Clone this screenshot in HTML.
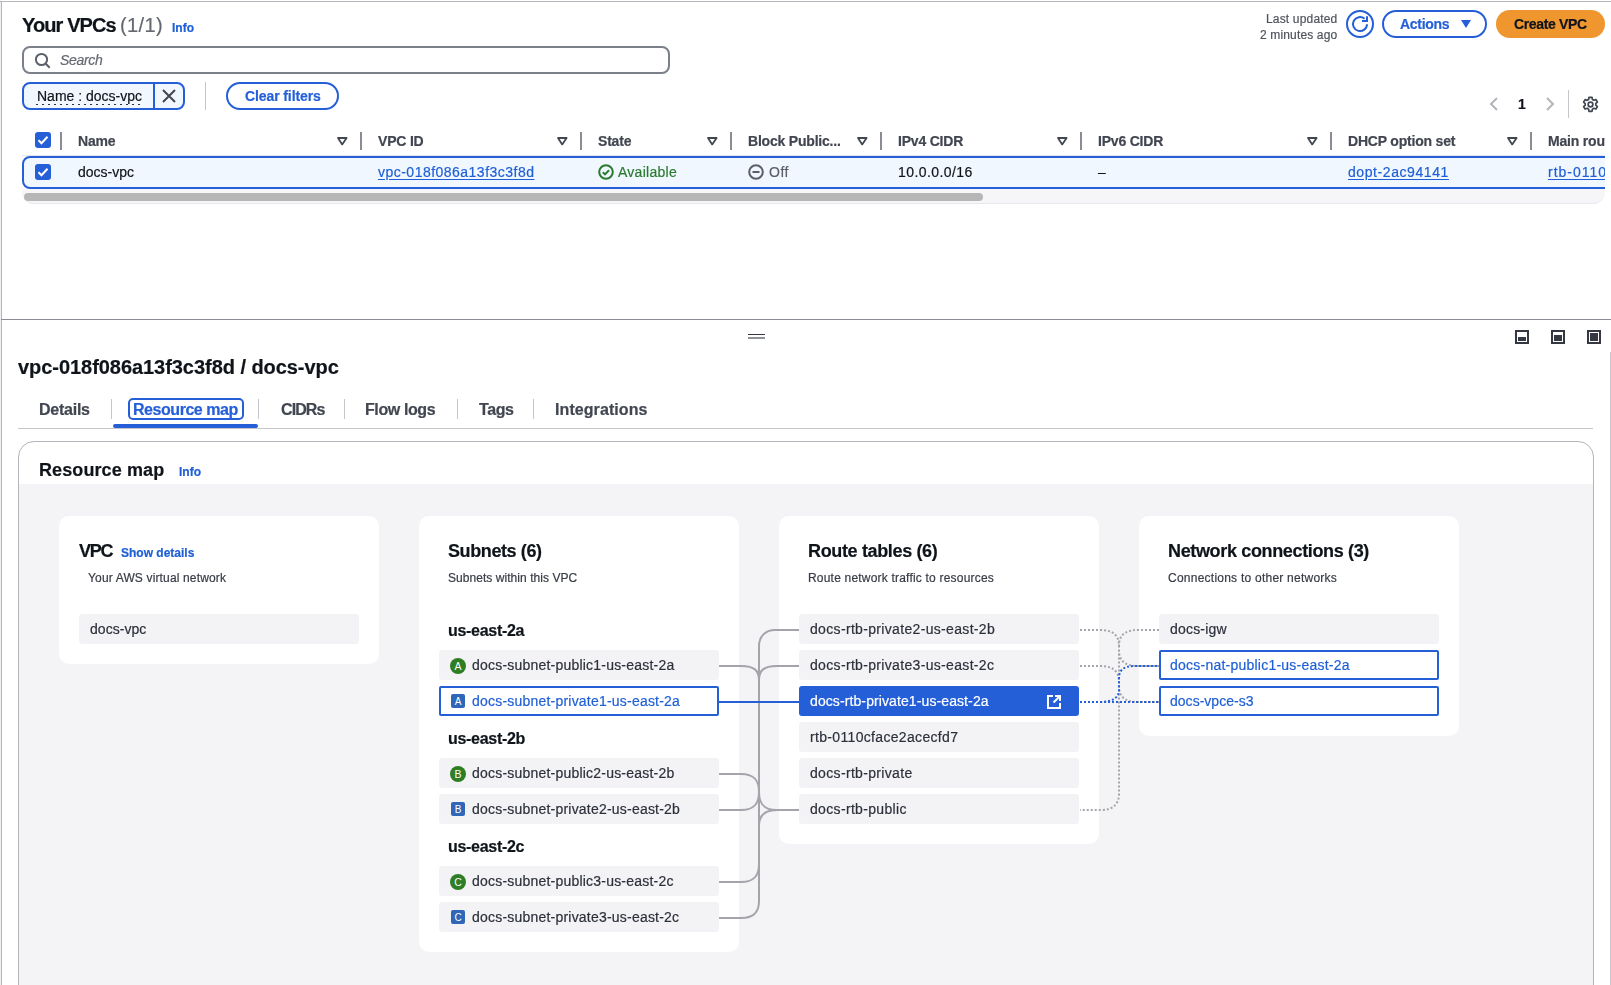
<!DOCTYPE html>
<html><head><meta charset="utf-8"><title>VPC resource map</title>
<style>
html,body{margin:0;padding:0;background:#fff;}
body{width:1611px;height:985px;position:relative;overflow:hidden;font-family:"Liberation Sans",sans-serif;}
.b{position:absolute;}
.t{position:absolute;white-space:nowrap;will-change:transform;-webkit-text-stroke:0.2px currentColor;}
svg.b{overflow:visible;}
</style></head><body>
<div class="b" style="left:0px;top:0px;width:1px;height:985px;background:#f0f0f2;"></div>
<div class="b" style="left:0px;top:1px;width:1611px;height:1px;background:#b4b4bb;"></div>
<div class="b" style="left:1px;top:1px;width:1px;height:985px;background:#b4b4bb;"></div>
<div class="t" style="left:22px;top:15.07px;font-size:20px;line-height:20px;color:#0f141a;font-weight:700;letter-spacing:-0.9px;">Your VPCs</div>
<div class="t" style="left:120px;top:15.07px;font-size:20px;line-height:20px;color:#656871;letter-spacing:0.4px;">(1/1)</div>
<div class="t" style="left:172px;top:21.84px;font-size:12px;line-height:12px;color:#1f5fd6;font-weight:700;">Info</div>
<div class="t" style="right:274px;top:12.84px;font-size:12px;line-height:12px;color:#4f535c;letter-spacing:0.17px;">Last updated</div>
<div class="t" style="right:274px;top:28.84px;font-size:12px;line-height:12px;color:#4f535c;letter-spacing:0.15px;">2 minutes ago</div>
<div class="b" style="left:1346px;top:10px;width:28px;height:28px;box-sizing:border-box;border:2px solid #255fd8;border-radius:50%;"></div>
<svg class="b" style="left:1352px;top:16px" width="16" height="16" viewBox="0 0 16 16"><path d="M15 8.2A7 7 0 1 1 12.6 2.8" fill="none" stroke="#255fd8" stroke-width="2"/><path d="M15 0.2V5H10" fill="none" stroke="#255fd8" stroke-width="2"/></svg>
<div class="b" style="left:1382px;top:10px;width:105px;height:28px;box-sizing:border-box;border:2px solid #255fd8;border-radius:14px;"></div>
<div class="t" style="left:1400px;top:17.15px;font-size:14px;line-height:14px;color:#255fd8;font-weight:700;letter-spacing:-0.3px;">Actions</div>
<svg class="b" style="left:1460px;top:19px" width="12" height="10" viewBox="0 0 12 10"><path d="M1 1h10L6 9z" fill="#255fd8"/></svg>
<div class="b" style="left:1496px;top:10px;width:109px;height:28px;background:#ef962f;border-radius:14px;"></div>
<div class="t" style="left:1514px;top:17.15px;font-size:14px;line-height:14px;color:#0f141a;font-weight:700;letter-spacing:-0.35px;">Create VPC</div>
<div class="b" style="left:22px;top:46px;width:648px;height:28px;box-sizing:border-box;border:2px solid #7b7f87;border-radius:8px;"></div>
<svg class="b" style="left:34px;top:52px" width="18" height="18" viewBox="0 0 18 18"><circle cx="7.5" cy="7.5" r="5.6" fill="none" stroke="#5b5f69" stroke-width="2"/><path d="M11.5 11.5l4.2 4.2" stroke="#5b5f69" stroke-width="2"/></svg>
<div class="t" style="left:60px;top:53.15px;font-size:14px;line-height:14px;color:#656871;font-style:italic;letter-spacing:-0.3px;">Search</div>
<div class="b" style="left:22px;top:82px;width:163px;height:28px;box-sizing:border-box;border:2px solid #255fd8;border-radius:8px;background:#f0f7ff;"></div>
<div class="b" style="left:153px;top:82px;width:2px;height:28px;background:#255fd8;"></div>
<div class="t" style="left:37px;top:89.15px;font-size:14px;line-height:14px;color:#0f141a;">Name : docs-vpc</div>
<div class="b" style="left:36px;top:104px;width:106px;height:1px;background:repeating-linear-gradient(90deg,#2c303a 0 2px,transparent 2px 6px);"></div>
<svg class="b" style="left:161px;top:88px" width="16" height="16" viewBox="0 0 16 16"><path d="M2 2l12 12M14 2L2 14" stroke="#424650" stroke-width="2"/></svg>
<div class="b" style="left:205px;top:82px;width:1px;height:28px;background:#c6c6cd;"></div>
<div class="b" style="left:226px;top:82px;width:113px;height:28px;box-sizing:border-box;border:2px solid #255fd8;border-radius:14px;"></div>
<div class="t" style="left:245px;top:89.15px;font-size:14px;line-height:14px;color:#255fd8;font-weight:700;letter-spacing:-0.1px;">Clear filters</div>
<svg class="b" style="left:1488px;top:97px" width="12" height="14" viewBox="0 0 12 14"><path d="M9 1L3 7l6 6" fill="none" stroke="#b4b4bb" stroke-width="2"/></svg>
<div class="t" style="left:1518px;top:97.15px;font-size:14px;line-height:14px;color:#0f141a;font-weight:700;">1</div>
<svg class="b" style="left:1544px;top:97px" width="12" height="14" viewBox="0 0 12 14"><path d="M3 1l6 6-6 6" fill="none" stroke="#b4b4bb" stroke-width="2"/></svg>
<div class="b" style="left:1568px;top:90px;width:1px;height:28px;background:#c6c6cd;"></div>
<svg class="b" style="left:1582px;top:96px" width="17" height="17" viewBox="0 0 16 16"><path d="M6.6 1.2h2.8l.4 2 1.4.8 1.9-.7 1.4 2.4-1.5 1.3v1.6l1.5 1.3-1.4 2.4-1.9-.7-1.4.8-.4 2H6.6l-.4-2-1.4-.8-1.9.7L1.5 10l1.5-1.3V7.1L1.5 5.8l1.4-2.4 1.9.7 1.4-.8z" fill="none" stroke="#424650" stroke-width="1.6" stroke-linejoin="round"/><circle cx="8" cy="8" r="2.2" fill="none" stroke="#424650" stroke-width="1.6"/></svg>
<div class="b" style="left:22px;top:156px;width:1640px;height:33px;box-sizing:border-box;border:2px solid #255fd8;border-radius:8px;background:#f0f7ff;"></div>
<div class="b" style="left:22px;top:155px;width:1583px;height:1px;background:#e6e6ea;"></div>
<div class="b" style="left:35px;top:132px;width:16px;height:16px;background:#255fd8;border-radius:3px;"></div>
<svg class="b" style="left:35px;top:132px" width="16" height="16" viewBox="0 0 16 16"><path d="M3.5 8.2l3 3 6-6.4" fill="none" stroke="#fff" stroke-width="2"/></svg>
<div class="b" style="left:60px;top:132px;width:2px;height:18px;background:#8a8c94;"></div>
<div class="b" style="left:360px;top:132px;width:2px;height:18px;background:#8a8c94;"></div>
<div class="b" style="left:580px;top:132px;width:2px;height:18px;background:#8a8c94;"></div>
<div class="b" style="left:730px;top:132px;width:2px;height:18px;background:#8a8c94;"></div>
<div class="b" style="left:880px;top:132px;width:2px;height:18px;background:#8a8c94;"></div>
<div class="b" style="left:1080px;top:132px;width:2px;height:18px;background:#8a8c94;"></div>
<div class="b" style="left:1330px;top:132px;width:2px;height:18px;background:#8a8c94;"></div>
<div class="b" style="left:1530px;top:132px;width:2px;height:18px;background:#8a8c94;"></div>
<div class="t" style="left:78px;top:134.15px;font-size:14px;line-height:14px;color:#424650;font-weight:700;letter-spacing:-0.2px;">Name</div>
<div class="t" style="left:378px;top:134.15px;font-size:14px;line-height:14px;color:#424650;font-weight:700;letter-spacing:-0.2px;">VPC ID</div>
<div class="t" style="left:598px;top:134.15px;font-size:14px;line-height:14px;color:#424650;font-weight:700;letter-spacing:-0.2px;">State</div>
<div class="t" style="left:748px;top:134.15px;font-size:14px;line-height:14px;color:#424650;font-weight:700;letter-spacing:-0.2px;">Block Public...</div>
<div class="t" style="left:898px;top:134.15px;font-size:14px;line-height:14px;color:#424650;font-weight:700;letter-spacing:-0.2px;">IPv4 CIDR</div>
<div class="t" style="left:1098px;top:134.15px;font-size:14px;line-height:14px;color:#424650;font-weight:700;letter-spacing:-0.2px;">IPv6 CIDR</div>
<div class="t" style="left:1348px;top:134.15px;font-size:14px;line-height:14px;color:#424650;font-weight:700;letter-spacing:-0.2px;">DHCP option set</div>
<div class="t" style="left:1548px;top:134.15px;font-size:14px;line-height:14px;color:#424650;font-weight:700;letter-spacing:-0.2px;">Main route table</div>
<svg class="b" style="left:337px;top:136px" width="11" height="10" viewBox="0 0 11 10"><path d="M1 2H9.6L5.2 8.4Z" fill="none" stroke="#424650" stroke-width="1.8" stroke-linejoin="round"/></svg>
<svg class="b" style="left:557px;top:136px" width="11" height="10" viewBox="0 0 11 10"><path d="M1 2H9.6L5.2 8.4Z" fill="none" stroke="#424650" stroke-width="1.8" stroke-linejoin="round"/></svg>
<svg class="b" style="left:707px;top:136px" width="11" height="10" viewBox="0 0 11 10"><path d="M1 2H9.6L5.2 8.4Z" fill="none" stroke="#424650" stroke-width="1.8" stroke-linejoin="round"/></svg>
<svg class="b" style="left:857px;top:136px" width="11" height="10" viewBox="0 0 11 10"><path d="M1 2H9.6L5.2 8.4Z" fill="none" stroke="#424650" stroke-width="1.8" stroke-linejoin="round"/></svg>
<svg class="b" style="left:1057px;top:136px" width="11" height="10" viewBox="0 0 11 10"><path d="M1 2H9.6L5.2 8.4Z" fill="none" stroke="#424650" stroke-width="1.8" stroke-linejoin="round"/></svg>
<svg class="b" style="left:1307px;top:136px" width="11" height="10" viewBox="0 0 11 10"><path d="M1 2H9.6L5.2 8.4Z" fill="none" stroke="#424650" stroke-width="1.8" stroke-linejoin="round"/></svg>
<svg class="b" style="left:1507px;top:136px" width="11" height="10" viewBox="0 0 11 10"><path d="M1 2H9.6L5.2 8.4Z" fill="none" stroke="#424650" stroke-width="1.8" stroke-linejoin="round"/></svg>
<div class="b" style="left:35px;top:164px;width:16px;height:16px;background:#255fd8;border-radius:3px;"></div>
<svg class="b" style="left:35px;top:164px" width="16" height="16" viewBox="0 0 16 16"><path d="M3.5 8.2l3 3 6-6.4" fill="none" stroke="#fff" stroke-width="2"/></svg>
<div class="t" style="left:78px;top:165.15px;font-size:14px;line-height:14px;color:#0f141a;">docs-vpc</div>
<div class="t" style="left:378px;top:165.15px;font-size:14px;line-height:14px;color:#1f5fd6;letter-spacing:0.48px;text-decoration:underline;text-underline-offset:2px;">vpc-018f086a13f3c3f8d</div>
<svg class="b" style="left:598px;top:164px" width="16" height="16" viewBox="0 0 16 16"><circle cx="8" cy="8" r="6.8" fill="none" stroke="#2a7b2e" stroke-width="2"/><path d="M4.8 8.2l2.2 2.2 4-4.2" fill="none" stroke="#2a7b2e" stroke-width="2"/></svg>
<div class="t" style="left:618px;top:165.15px;font-size:14px;line-height:14px;color:#2a7b2e;letter-spacing:0.27px;">Available</div>
<svg class="b" style="left:748px;top:164px" width="16" height="16" viewBox="0 0 16 16"><circle cx="8" cy="8" r="6.8" fill="none" stroke="#5b5f69" stroke-width="2"/><path d="M4.5 8h7" stroke="#5b5f69" stroke-width="2"/></svg>
<div class="t" style="left:769px;top:165.15px;font-size:14px;line-height:14px;color:#5b5f69;letter-spacing:0.5px;">Off</div>
<div class="t" style="left:898px;top:165.15px;font-size:14px;line-height:14px;color:#0f141a;letter-spacing:0.42px;">10.0.0.0/16</div>
<div class="t" style="left:1098px;top:165.15px;font-size:14px;line-height:14px;color:#0f141a;">–</div>
<div class="t" style="left:1348px;top:165.15px;font-size:14px;line-height:14px;color:#1f5fd6;letter-spacing:0.58px;text-decoration:underline;text-underline-offset:2px;">dopt-2ac94141</div>
<div class="t" style="left:1548px;top:165.15px;font-size:14px;line-height:14px;color:#1f5fd6;letter-spacing:1.0px;text-decoration:underline;text-underline-offset:2px;">rtb-0110cface2acecfd7</div>
<div class="b" style="left:22px;top:189px;width:1583px;height:15px;background:#f6f6f8;border-bottom:1px solid #e8e8ec;box-sizing:border-box;border-radius:0 0 12px 12px;"></div>
<div class="b" style="left:24px;top:193px;width:959px;height:8px;background:#b6b6b6;border-radius:4px;"></div>
<div class="b" style="left:1605px;top:120px;width:6px;height:90px;background:#ffffff;"></div>
<div class="b" style="left:1px;top:319px;width:1610px;height:1px;background:#8c8c94;"></div>
<div class="b" style="left:747.5px;top:334px;width:17px;height:1px;background:#353841;"></div>
<div class="b" style="left:747.5px;top:337px;width:17px;height:2px;background:#8f9299;"></div>
<div class="b" style="left:1515px;top:330px;width:14px;height:14px;box-sizing:border-box;border:2px solid #353841;"></div>
<div class="b" style="left:1518px;top:337px;width:8px;height:4px;background:#353841;"></div>
<div class="b" style="left:1551px;top:330px;width:14px;height:14px;box-sizing:border-box;border:2px solid #353841;"></div>
<div class="b" style="left:1554px;top:335px;width:8px;height:6px;background:#353841;"></div>
<div class="b" style="left:1587px;top:330px;width:14px;height:14px;box-sizing:border-box;border:2px solid #353841;"></div>
<div class="b" style="left:1590px;top:333px;width:8px;height:8px;background:#353841;"></div>
<div class="b" style="left:1610px;top:352px;width:1px;height:633px;background:#c6c6cd;"></div>
<div class="t" style="left:18px;top:357.07px;font-size:20px;line-height:20px;color:#0f141a;font-weight:700;letter-spacing:-0.05px;">vpc-018f086a13f3c3f8d / docs-vpc</div>
<div class="t" style="left:39px;top:402.46px;font-size:16px;line-height:16px;color:#424650;font-weight:700;letter-spacing:-0.25px;">Details</div>
<div class="t" style="left:132.5px;top:402.46px;font-size:16px;line-height:16px;color:#255fd8;font-weight:700;letter-spacing:-0.45px;">Resource map</div>
<div class="t" style="left:280.5px;top:402.46px;font-size:16px;line-height:16px;color:#424650;font-weight:700;letter-spacing:-0.9px;">CIDRs</div>
<div class="t" style="left:365px;top:402.46px;font-size:16px;line-height:16px;color:#424650;font-weight:700;letter-spacing:-0.4px;">Flow logs</div>
<div class="t" style="left:479px;top:402.46px;font-size:16px;line-height:16px;color:#424650;font-weight:700;letter-spacing:-0.4px;">Tags</div>
<div class="t" style="left:554.5px;top:402.46px;font-size:16px;line-height:16px;color:#424650;font-weight:700;letter-spacing:0.08px;">Integrations</div>
<div class="b" style="left:111px;top:399px;width:1px;height:20px;background:#c6c6cd;"></div>
<div class="b" style="left:258px;top:399px;width:1px;height:20px;background:#c6c6cd;"></div>
<div class="b" style="left:344px;top:399px;width:1px;height:20px;background:#c6c6cd;"></div>
<div class="b" style="left:457px;top:399px;width:1px;height:20px;background:#c6c6cd;"></div>
<div class="b" style="left:533px;top:399px;width:1px;height:20px;background:#c6c6cd;"></div>
<div class="b" style="left:128px;top:398px;width:116px;height:22px;box-sizing:border-box;border:2px solid #255fd8;border-radius:5px;"></div>
<div class="b" style="left:18px;top:428px;width:1575px;height:1px;background:#c6c6cd;"></div>
<div class="b" style="left:113px;top:424px;width:145px;height:4px;background:#255fd8;border-radius:2px;"></div>
<div class="b" style="left:18px;top:441px;width:1576px;height:600px;box-sizing:border-box;border:1px solid #b4b4bb;border-radius:16px;background:#fff;overflow:hidden;"></div>
<div class="b" style="left:19px;top:484px;width:1574px;height:600px;background:#f4f4f6;"></div>
<div class="t" style="left:39px;top:460.76px;font-size:18px;line-height:18px;color:#0f141a;font-weight:700;letter-spacing:0.1px;">Resource map</div>
<div class="t" style="left:179px;top:465.84px;font-size:12px;line-height:12px;color:#1f5fd6;font-weight:700;">Info</div>
<div class="b" style="left:59px;top:516px;width:320px;height:148px;background:#fff;border-radius:10px;"></div>
<div class="b" style="left:419px;top:516px;width:320px;height:436px;background:#fff;border-radius:10px;"></div>
<div class="b" style="left:779px;top:516px;width:320px;height:328px;background:#fff;border-radius:10px;"></div>
<div class="b" style="left:1139px;top:516px;width:320px;height:220px;background:#fff;border-radius:10px;"></div>
<div class="t" style="left:79px;top:541.76px;font-size:18px;line-height:18px;color:#0f141a;font-weight:700;letter-spacing:-1.2px;">VPC</div>
<div class="t" style="left:121px;top:546.84px;font-size:12px;line-height:12px;color:#1f5fd6;font-weight:700;">Show details</div>
<div class="t" style="left:88px;top:571.84px;font-size:12px;line-height:12px;color:#373b45;letter-spacing:0.15px;">Your AWS virtual network</div>
<div class="b" style="left:79px;top:614px;width:280px;height:30px;background:#f3f3f6;border-radius:3px;"></div>
<div class="t" style="left:90px;top:622.15px;font-size:14px;line-height:14px;color:#2c303a;letter-spacing:0.05px;">docs-vpc</div>
<div class="t" style="left:448px;top:541.76px;font-size:18px;line-height:18px;color:#0f141a;font-weight:700;letter-spacing:-0.4px;">Subnets (6)</div>
<div class="t" style="left:448px;top:571.84px;font-size:12px;line-height:12px;color:#373b45;letter-spacing:0.05px;">Subnets within this VPC</div>
<div class="t" style="left:448px;top:623.46px;font-size:16px;line-height:16px;color:#0f141a;font-weight:700;letter-spacing:-0.3px;">us-east-2a</div>
<div class="t" style="left:448px;top:731.46px;font-size:16px;line-height:16px;color:#0f141a;font-weight:700;letter-spacing:-0.3px;">us-east-2b</div>
<div class="t" style="left:448px;top:839.46px;font-size:16px;line-height:16px;color:#0f141a;font-weight:700;letter-spacing:-0.3px;">us-east-2c</div>
<div class="b" style="left:439px;top:650px;width:280px;height:30px;background:#f3f3f6;border-radius:3px;"></div>
<div class="t" style="left:472px;top:658.15px;font-size:14px;line-height:14px;color:#2c303a;letter-spacing:0.21px;">docs-subnet-public1-us-east-2a</div>
<svg class="b" style="left:450px;top:658px" width="16" height="16" viewBox="0 0 16 16"><circle cx="8" cy="8" r="8" fill="#2f7d25"/><text x="8" y="12" text-anchor="middle" font-family="Liberation Sans" font-weight="400" font-size="10.5" fill="#fff">A</text></svg>
<div class="b" style="left:439px;top:686px;width:280px;height:30px;background:#fff;box-sizing:border-box;border:2px solid #255fd8;border-radius:2px;"></div>
<div class="t" style="left:472px;top:694.15px;font-size:14px;line-height:14px;color:#1f5fd6;letter-spacing:0.21px;">docs-subnet-private1-us-east-2a</div>
<svg class="b" style="left:451px;top:694px" width="14" height="14" viewBox="0 0 14 14"><rect x="0" y="0" width="14" height="14" rx="2" fill="#2f66b8"/><text x="7" y="10.8" text-anchor="middle" font-family="Liberation Sans" font-weight="400" font-size="10" fill="#fff">A</text></svg>
<div class="b" style="left:439px;top:758px;width:280px;height:30px;background:#f3f3f6;border-radius:3px;"></div>
<div class="t" style="left:472px;top:766.15px;font-size:14px;line-height:14px;color:#2c303a;letter-spacing:0.21px;">docs-subnet-public2-us-east-2b</div>
<svg class="b" style="left:450px;top:766px" width="16" height="16" viewBox="0 0 16 16"><circle cx="8" cy="8" r="8" fill="#2f7d25"/><text x="8" y="12" text-anchor="middle" font-family="Liberation Sans" font-weight="400" font-size="10.5" fill="#fff">B</text></svg>
<div class="b" style="left:439px;top:794px;width:280px;height:30px;background:#f3f3f6;border-radius:3px;"></div>
<div class="t" style="left:472px;top:802.15px;font-size:14px;line-height:14px;color:#2c303a;letter-spacing:0.21px;">docs-subnet-private2-us-east-2b</div>
<svg class="b" style="left:451px;top:802px" width="14" height="14" viewBox="0 0 14 14"><rect x="0" y="0" width="14" height="14" rx="2" fill="#2f66b8"/><text x="7" y="10.8" text-anchor="middle" font-family="Liberation Sans" font-weight="400" font-size="10" fill="#fff">B</text></svg>
<div class="b" style="left:439px;top:866px;width:280px;height:30px;background:#f3f3f6;border-radius:3px;"></div>
<div class="t" style="left:472px;top:874.15px;font-size:14px;line-height:14px;color:#2c303a;letter-spacing:0.21px;">docs-subnet-public3-us-east-2c</div>
<svg class="b" style="left:450px;top:874px" width="16" height="16" viewBox="0 0 16 16"><circle cx="8" cy="8" r="8" fill="#2f7d25"/><text x="8" y="12" text-anchor="middle" font-family="Liberation Sans" font-weight="400" font-size="10.5" fill="#fff">C</text></svg>
<div class="b" style="left:439px;top:902px;width:280px;height:30px;background:#f3f3f6;border-radius:3px;"></div>
<div class="t" style="left:472px;top:910.15px;font-size:14px;line-height:14px;color:#2c303a;letter-spacing:0.21px;">docs-subnet-private3-us-east-2c</div>
<svg class="b" style="left:451px;top:910px" width="14" height="14" viewBox="0 0 14 14"><rect x="0" y="0" width="14" height="14" rx="2" fill="#2f66b8"/><text x="7" y="10.8" text-anchor="middle" font-family="Liberation Sans" font-weight="400" font-size="10" fill="#fff">C</text></svg>
<div class="t" style="left:808px;top:541.76px;font-size:18px;line-height:18px;color:#0f141a;font-weight:700;letter-spacing:-0.35px;">Route tables (6)</div>
<div class="t" style="left:808px;top:571.84px;font-size:12px;line-height:12px;color:#373b45;letter-spacing:0.2px;">Route network traffic to resources</div>
<div class="b" style="left:799px;top:614px;width:280px;height:30px;background:#f3f3f6;border-radius:3px;"></div>
<div class="t" style="left:810px;top:622.15px;font-size:14px;line-height:14px;color:#2c303a;letter-spacing:0.33px;">docs-rtb-private2-us-east-2b</div>
<div class="b" style="left:799px;top:650px;width:280px;height:30px;background:#f3f3f6;border-radius:3px;"></div>
<div class="t" style="left:810px;top:658.15px;font-size:14px;line-height:14px;color:#2c303a;letter-spacing:0.33px;">docs-rtb-private3-us-east-2c</div>
<div class="b" style="left:799px;top:686px;width:280px;height:30px;background:#255fd8;border-radius:3px;"></div>
<div class="t" style="left:810px;top:694.15px;font-size:14px;line-height:14px;color:#ffffff;letter-spacing:0.1px;">docs-rtb-private1-us-east-2a</div>
<svg class="b" style="left:1047px;top:695px" width="14" height="14" viewBox="0 0 14 14"><path d="M6 1H1v12h12V8" fill="none" stroke="#fff" stroke-width="2"/><path d="M8 1h5v5M13 1L6.5 7.5" fill="none" stroke="#fff" stroke-width="2"/></svg>
<div class="b" style="left:799px;top:722px;width:280px;height:30px;background:#f3f3f6;border-radius:3px;"></div>
<div class="t" style="left:810px;top:730.15px;font-size:14px;line-height:14px;color:#2c303a;letter-spacing:0.33px;">rtb-0110cface2acecfd7</div>
<div class="b" style="left:799px;top:758px;width:280px;height:30px;background:#f3f3f6;border-radius:3px;"></div>
<div class="t" style="left:810px;top:766.15px;font-size:14px;line-height:14px;color:#2c303a;letter-spacing:0.33px;">docs-rtb-private</div>
<div class="b" style="left:799px;top:794px;width:280px;height:30px;background:#f3f3f6;border-radius:3px;"></div>
<div class="t" style="left:810px;top:802.15px;font-size:14px;line-height:14px;color:#2c303a;letter-spacing:0.33px;">docs-rtb-public</div>
<div class="t" style="left:1168px;top:541.76px;font-size:18px;line-height:18px;color:#0f141a;font-weight:700;letter-spacing:-0.35px;">Network connections (3)</div>
<div class="t" style="left:1168px;top:571.84px;font-size:12px;line-height:12px;color:#373b45;letter-spacing:0.24px;">Connections to other networks</div>
<div class="b" style="left:1159px;top:614px;width:280px;height:30px;background:#f3f3f6;border-radius:3px;"></div>
<div class="t" style="left:1170px;top:622.15px;font-size:14px;line-height:14px;color:#2c303a;letter-spacing:0.2px;">docs-igw</div>
<div class="b" style="left:1159px;top:650px;width:280px;height:30px;background:#fff;box-sizing:border-box;border:2px solid #255fd8;border-radius:2px;"></div>
<div class="t" style="left:1170px;top:658.15px;font-size:14px;line-height:14px;color:#1f5fd6;letter-spacing:0.23px;">docs-nat-public1-us-east-2a</div>
<div class="b" style="left:1159px;top:686px;width:280px;height:30px;background:#fff;box-sizing:border-box;border:2px solid #255fd8;border-radius:2px;"></div>
<div class="t" style="left:1170px;top:694.15px;font-size:14px;line-height:14px;color:#1f5fd6;letter-spacing:0.02px;">docs-vpce-s3</div>
<svg class="b" style="left:0px;top:0px" width="1611" height="985" viewBox="0 0 1611 985"><path d="M759 901 V646 C759 637 765 630 775 630 H799" fill="none" stroke="#a4a4ab" stroke-width="2"/><path d="M719 666 H741 C755 666 759 671 759 680" fill="none" stroke="#a4a4ab" stroke-width="2"/><path d="M799 666 H777 C763 666 759 671 759 680" fill="none" stroke="#a4a4ab" stroke-width="2"/><path d="M719 774 H741 C755 774 759 781 759 792" fill="none" stroke="#a4a4ab" stroke-width="2"/><path d="M719 810 H741 C755 810 759 803 759 792" fill="none" stroke="#a4a4ab" stroke-width="2"/><path d="M799 810 H777 C763 810 759 803 759 792" fill="none" stroke="#a4a4ab" stroke-width="2"/><path d="M799 810 H777 C763 810 759 817 759 826" fill="none" stroke="#a4a4ab" stroke-width="2"/><path d="M719 882 H741 C755 882 759 875 759 864" fill="none" stroke="#a4a4ab" stroke-width="2"/><path d="M719 918 H741 C755 918 759 911 759 901" fill="none" stroke="#a4a4ab" stroke-width="2"/><path d="M719 702 H799" fill="none" stroke="#255fd8" stroke-width="2"/><path d="M1080 630 H1100 C1115 630 1119 637 1119 646 V794 C1119 804 1113 810 1101 810 H1080" fill="none" stroke="#a4a4ab" stroke-width="2" stroke-dasharray="2 2"/><path d="M1159 630 H1138 C1123 630 1119 637 1119 646" fill="none" stroke="#a4a4ab" stroke-width="2" stroke-dasharray="2 2"/><path d="M1080 666 H1100 C1115 666 1119 673 1119 682" fill="none" stroke="#a4a4ab" stroke-width="2" stroke-dasharray="2 2"/><path d="M1159 666 H1138 C1123 666 1119 659 1119 650" fill="none" stroke="#a4a4ab" stroke-width="2" stroke-dasharray="2 2"/><path d="M1159 702 H1138 C1123 702 1119 695 1119 686" fill="none" stroke="#a4a4ab" stroke-width="2" stroke-dasharray="2 2"/><path d="M1080 702 H1159" fill="none" stroke="#255fd8" stroke-width="2" stroke-dasharray="2 2"/><path d="M1100 702 C1112 702 1119 698 1119 690 V678 C1119 670 1124 666 1134 666 H1159" fill="none" stroke="#255fd8" stroke-width="2" stroke-dasharray="2 2"/></svg>
</body></html>
